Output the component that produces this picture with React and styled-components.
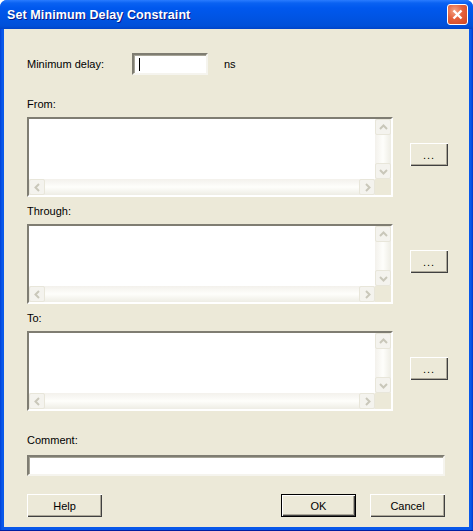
import React from 'react';
import styled, { createGlobalStyle } from 'styled-components';

const GlobalStyle = createGlobalStyle`
    html, body {
        margin: 0;
        padding: 0;
        background: #ffffff;
    }
    body {
        font-family: "Liberation Sans", Arial, sans-serif;
        font-size: 11px;
        color: #000000;
    }
`;

function Arrow({ dir }) {
    const paths = {
        up: 'M2 7 L5.5 3.5 L9 7',
        down: 'M2 4 L5.5 7.5 L9 4',
        left: 'M7 2 L3.5 5.5 L7 9',
        right: 'M4 2 L7.5 5.5 L4 9',
    };
    return (
        <svg width="11" height="11" viewBox="0 0 11 11">
            <path
                d={paths[dir]}
                fill="none"
                stroke="#c9c7ba"
                strokeWidth="2"
            />
        </svg>
    );
}

function ListField({ label }) {
    return (
        <Section>
            <FieldLabel>{label}</FieldLabel>
            <SectionRow>
                <ListBox>
                    <ListArea />
                    <VScroll>
                        <ScrollButton>
                            <Arrow dir="up" />
                        </ScrollButton>
                        <ScrollButton>
                            <Arrow dir="down" />
                        </ScrollButton>
                    </VScroll>
                    <HScroll>
                        <ScrollButton>
                            <Arrow dir="left" />
                        </ScrollButton>
                        <ScrollButton>
                            <Arrow dir="right" />
                        </ScrollButton>
                    </HScroll>
                    <Corner />
                </ListBox>
                <BrowseButton>...</BrowseButton>
            </SectionRow>
        </Section>
    );
}

function App() {
    return (
        <>
            <GlobalStyle />
            <Window>
                <TitleBar>
                    <Title>Set Minimum Delay Constraint</Title>
                    <CloseButton>
                        <svg width="13" height="13" viewBox="0 0 13 13">
                            <path
                                d="M2.5 2.5 L10.5 10.5 M10.5 2.5 L2.5 10.5"
                                stroke="#ffffff"
                                strokeWidth="2.4"
                            />
                        </svg>
                    </CloseButton>
                </TitleBar>
                <Body>
                    <DelayRow>
                        <span>Minimum delay:</span>
                        <TextBox $width="76px" $height="22px">
                            <Caret />
                        </TextBox>
                        <span>ns</span>
                    </DelayRow>
                    <ListField label="From:" />
                    <ListField label="Through:" />
                    <ListField label="To:" />
                    <CommentLabel>Comment:</CommentLabel>
                    <TextBox $width="100%" $height="21px" />
                    <ButtonRow>
                        <Button>Help</Button>
                        <RightButtons>
                            <Button $default>OK</Button>
                            <Button>Cancel</Button>
                        </RightButtons>
                    </ButtonRow>
                </Body>
            </Window>
        </>
    );
}

const Window = styled.div`
    width: 473px;
    height: 531px;
    box-sizing: border-box;
    display: flex;
    flex-direction: column;
    background: linear-gradient(90deg, #0040d6 0, #0858ea 2px, #0858ea 471px, #0036c8 473px);
    border-radius: 7px 7px 0 0;
    overflow: hidden;
    border-bottom: 1px solid #001ea0;
`;

const TitleBar = styled.div`
    height: 29px;
    flex: none;
    display: flex;
    align-items: center;
    justify-content: space-between;
    padding: 0 5px 0 7px;
    background: linear-gradient(
        180deg,
        #2a7cff 0,
        #0a62f2 3px,
        #0058ee 8px,
        #0054e3 18px,
        #0050d8 26px,
        #0043c8 29px
    );
`;

const Title = styled.span`
    color: #ffffff;
    font-family: "Liberation Sans", Arial, sans-serif;
    font-weight: bold;
    font-size: 12.5px;
    text-shadow: 1px 1px 0 #0a1883;
    letter-spacing: 0.1px;
`;

const CloseButton = styled.div`
    width: 21px;
    height: 21px;
    box-sizing: border-box;
    border: 1px solid #ffffff;
    border-radius: 3px;
    background: radial-gradient(circle at 35% 30%, #f4a384 0, #e4603b 45%, #cf4520 100%);
    display: flex;
    align-items: center;
    justify-content: center;
`;

const Body = styled.div`
    flex: 1;
    margin: 0 4px 3px 4px;
    background: #ece9d8;
    padding: 24px 24px 0 23px;
    display: flex;
    flex-direction: column;
`;

const DelayRow = styled.div`
    display: flex;
    align-items: center;
    height: 22px;

    & > span:first-child {
        width: 105px;
    }
    & > span:last-child {
        margin-left: 16px;
    }
`;

const TextBox = styled.div`
    width: ${(p) => p.$width};
    height: ${(p) => p.$height};
    box-sizing: border-box;
    background: #ffffff;
    border-style: solid;
    border-width: 2px;
    border-color: #7f7d72 #f5f4ee #f5f4ee #7f7d72;
    box-shadow: inset 1px 1px 0 #a6a497;
    display: flex;
    align-items: center;
    padding-left: 5px;
`;

const Caret = styled.div`
    width: 1px;
    height: 13px;
    background: #000000;
`;

const Section = styled.div`
    margin-top: 23px;
    & + & {
        margin-top: 8px;
    }
`;

const FieldLabel = styled.div`
    height: 13px;
    line-height: 13px;
    margin-bottom: 6px;
`;

const SectionRow = styled.div`
    display: flex;
    align-items: flex-start;
`;

const ListBox = styled.div`
    flex: none;
    width: 366px;
    height: 80px;
    box-sizing: border-box;
    border-style: solid;
    border-width: 2px;
    border-color: #7f7d72 #ffffff #ffffff #7f7d72;
    box-shadow: inset 1px 1px 0 #a6a497;
    background: #ffffff;
    display: grid;
    grid-template-columns: 1fr 16px;
    grid-template-rows: 1fr 16px;
`;

const ListArea = styled.div`
    background: #ffffff;
`;

const VScroll = styled.div`
    display: flex;
    flex-direction: column;
    justify-content: space-between;
    background: linear-gradient(90deg, #f3f1ec 0, #fefefb 50%, #eeede5 100%);
`;

const HScroll = styled.div`
    display: flex;
    justify-content: space-between;
    background: linear-gradient(180deg, #f3f1ec 0, #fefefb 50%, #eeede5 100%);
`;

const ScrollButton = styled.div`
    width: 16px;
    height: 16px;
    box-sizing: border-box;
    border: 1px solid #e8e6da;
    border-radius: 2px;
    background: #f4f3ee;
    display: flex;
    align-items: center;
    justify-content: center;
`;

const Corner = styled.div`
    background: #ece9d8;
`;

const Button = styled.button`
    flex: none;
    width: 75px;
    height: 23px;
    box-sizing: border-box;
    padding: 0;
    font-family: "Liberation Sans", Arial, sans-serif;
    font-size: 11px;
    color: #000000;
    background: #ece9d8;
    border-style: solid;
    border-width: ${(p) => (p.$default ? '1px' : '0')};
    border-color: #000000;
    box-shadow: inset 1px 1px 0 #ffffff, inset -1px -1px 0 #404040,
        inset -2px -2px 0 #aca899;
`;

const BrowseButton = styled(Button)`
    width: 38px;
    margin-top: 26px;
    margin-left: 17px;
    letter-spacing: 1px;
`;

const CommentLabel = styled(FieldLabel)`
    margin-top: 23px;
    margin-bottom: 8px;
`;

const ButtonRow = styled.div`
    display: flex;
    justify-content: space-between;
    margin-top: 18px;
`;

const RightButtons = styled.div`
    display: flex;
    gap: 14px;
`;

export default App;
